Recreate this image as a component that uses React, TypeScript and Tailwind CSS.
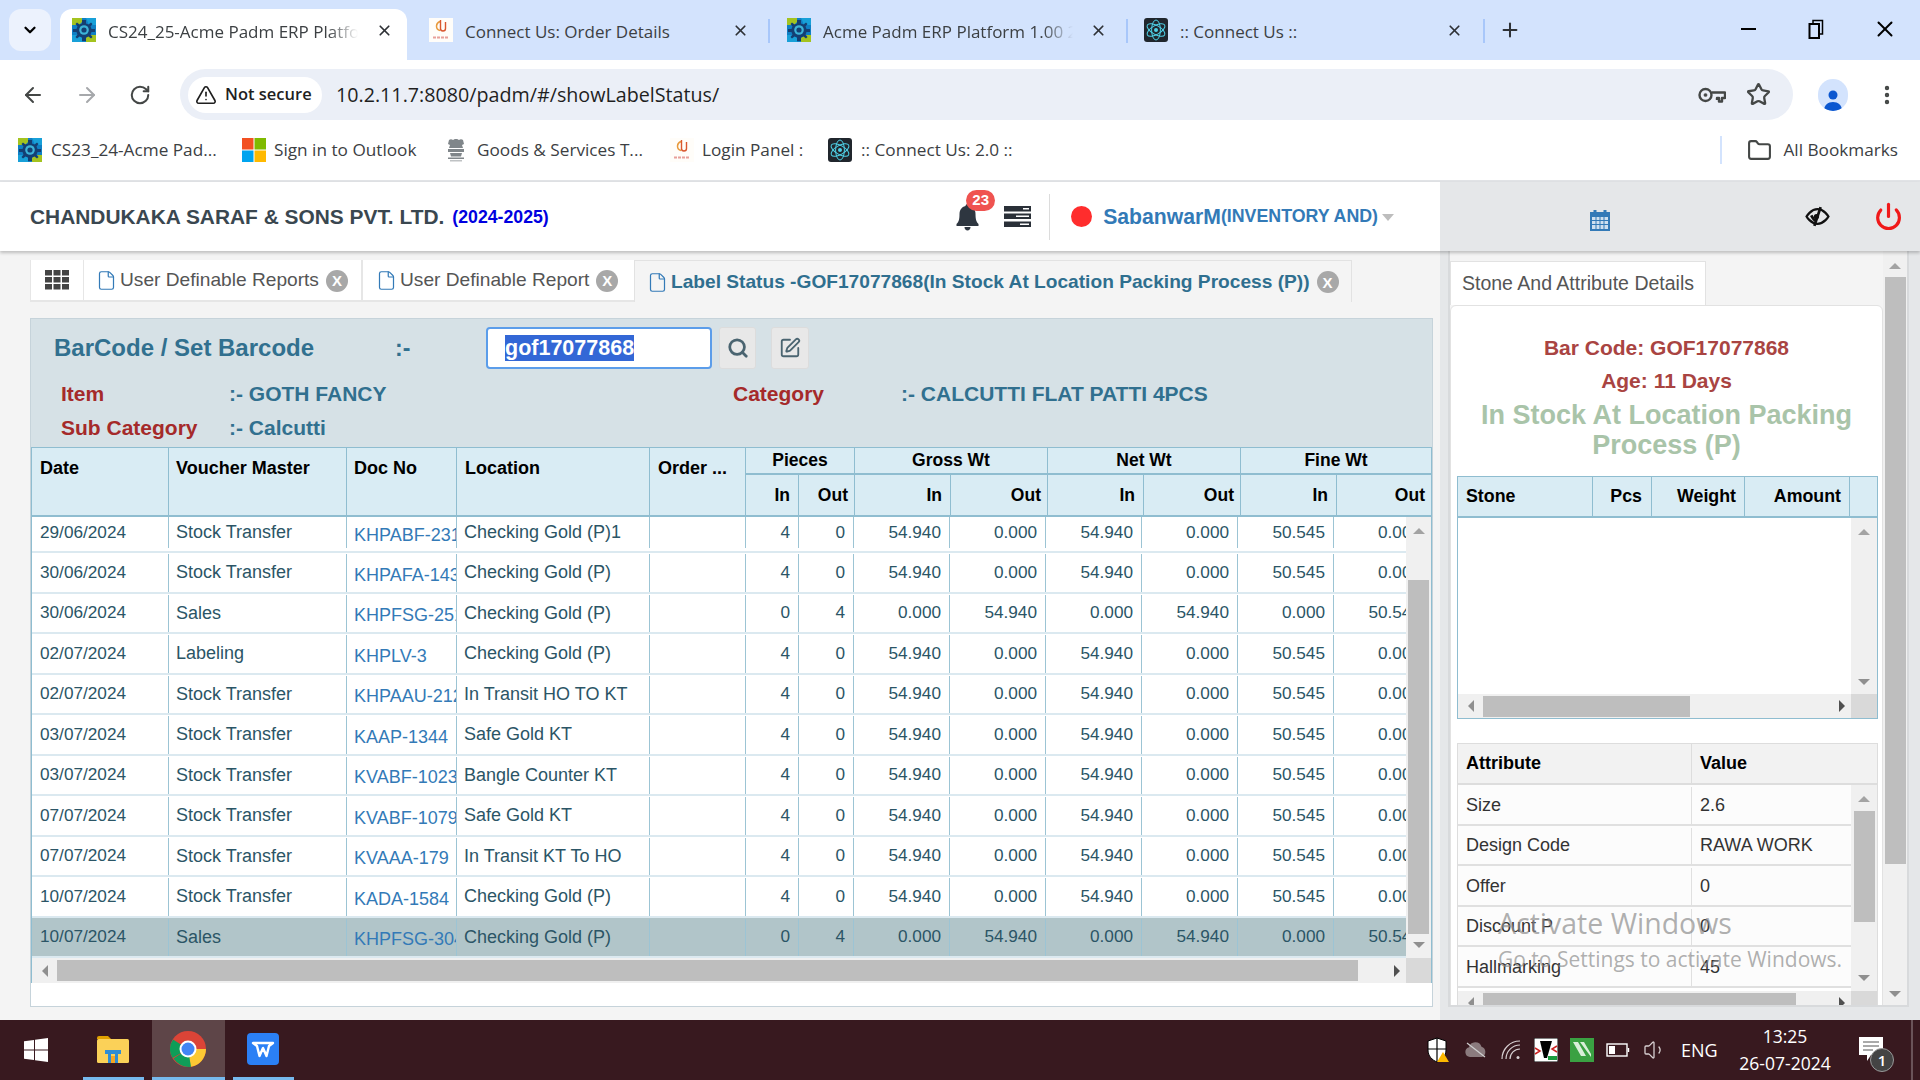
import {
  ArrowLeft,
  ArrowRight,
  ChevronDown,
  File,
  Folder,
  MoreVertical,
  Plus,
  Power,
  RotateCw,
  Search,
  SquarePen,
  Star,
  TriangleAlert,
  Volume1,
  X,
} from "lucide-react";

type Row = {
  date: string;
  voucher: string;
  doc: string;
  location: string;
  sold?: boolean;
  selected?: boolean;
  h?: string;
};

const ROWS: Row[] = [
  { date: "29/06/2024", voucher: "Stock Transfer", doc: "KHPABF-2314", location: "Checking Gold (P)1", h: "h-[36px] pb-[3px]" },
  { date: "30/06/2024", voucher: "Stock Transfer", doc: "KHPAFA-1432", location: "Checking Gold (P)" },
  { date: "30/06/2024", voucher: "Sales", doc: "KHPFSG-2512", location: "Checking Gold (P)", sold: true },
  { date: "02/07/2024", voucher: "Labeling", doc: "KHPLV-3", location: "Checking Gold (P)" },
  { date: "02/07/2024", voucher: "Stock Transfer", doc: "KHPAAU-2124", location: "In Transit HO TO KT" },
  { date: "03/07/2024", voucher: "Stock Transfer", doc: "KAAP-1344", location: "Safe Gold KT" },
  { date: "03/07/2024", voucher: "Stock Transfer", doc: "KVABF-1023", location: "Bangle Counter KT" },
  { date: "07/07/2024", voucher: "Stock Transfer", doc: "KVABF-1079", location: "Safe Gold KT" },
  { date: "07/07/2024", voucher: "Stock Transfer", doc: "KVAAA-179", location: "In Transit KT To HO" },
  { date: "10/07/2024", voucher: "Stock Transfer", doc: "KADA-1584", location: "Checking Gold (P)" },
  { date: "10/07/2024", voucher: "Sales", doc: "KHPFSG-3041", location: "Checking Gold (P)", sold: true, selected: true },
];

const ATTRS = [
  ["Size", "2.6"],
  ["Design Code", "RAWA WORK"],
  ["Offer", "0"],
  ["Discount P", "0"],
  ["Hallmarking", "45"],
];

function AcmeIcon() {
  return (
    <svg viewBox="0 0 24 24" className="h-[24px] w-[24px] shrink-0">
      <rect width="24" height="24" fill="#0f7fc4" />
      <path d="M0 0h10v4l-3 3H0zM24 24H14v-4l3-3h7z" fill="#a4c31f" />
      <path d="M14 0h10v7h-7zM0 17h7l3 3v4H0z" fill="#18a0d8" />
      <path d="M10 2h4v3.500l2.500 1 2.500-2 1.500 1.500-2 2.500 1 2.500H23v3h-3.500l-1 2.500 2 2.500-1.500 1.500-2.500-2-2.500 1V23h-4v-3.500l-2.500-1-2.500 2L3.500 19l2-2.500-1-2.500H1v-3h3.500l1-2.500-2-2.500L5 4.500l2.500 2 2.500-1z" fill="#143f73" />
      <circle cx="12" cy="12" r="4.800" fill="#3cb4d8" />
      <circle cx="12" cy="12" r="2.600" fill="#143f73" />
    </svg>
  );
}

function ReactIcon() {
  return (
    <svg viewBox="0 0 24 24" className="h-[24px] w-[24px] shrink-0">
      <rect width="24" height="24" rx="3" fill="#20262d" />
      <circle cx="12" cy="12" r="2" fill="#4fd0e6" />
      <g fill="none" stroke="#4fd0e6" strokeWidth="1">
        <ellipse cx="12" cy="12" rx="4.400" ry="10" />
        <ellipse cx="12" cy="12" rx="4.400" ry="10" transform="rotate(60 12 12)" />
        <ellipse cx="12" cy="12" rx="4.400" ry="10" transform="rotate(120 12 12)" />
      </g>
    </svg>
  );
}

function ConnectIcon() {
  return (
    <svg viewBox="0 0 24 24" className="h-[24px] w-[24px] shrink-0">
      <rect width="24" height="24" fill="#fffdf9" />
      <path d="M11 3.500a5 5 0 0 0-3.500 4.500c0 2.500 1.500 4 3.500 4.500" fill="none" stroke="#e89a3c" strokeWidth="1.500" />
      <path d="M11.500 2v8.500a2.500 2.500 0 0 0 5 0V4" fill="none" stroke="#d9572f" strokeWidth="1.400" />
      <path d="M4 19.500h16" stroke="#e8a09a" strokeWidth="2" strokeDasharray="3 1" />
    </svg>
  );
}

function MsIcon() {
  return (
    <svg viewBox="0 0 24 24" className="h-[24px] w-[24px] shrink-0">
      <rect width="11.500" height="11.500" fill="#f25022" />
      <rect x="12.500" width="11.500" height="11.500" fill="#7fba00" />
      <rect y="12.500" width="11.500" height="11.500" fill="#00a4ef" />
      <rect x="12.500" y="12.500" width="11.500" height="11.500" fill="#ffb900" />
    </svg>
  );
}

function EmblemIcon() {
  return (
    <svg viewBox="0 0 24 24" className="h-[24px] w-[24px] shrink-0" fill="#80868a">
      <path d="M5 2c1-1 3-1 4 0 1-1.500 5-1.500 6 0 1-1 3-1 4 0l1 4-2 1 1 3H5l1-3-2-1z" />
      <rect x="4" y="11" width="16" height="3" />
      <path d="M6 15h12l-1 3.500H7z" />
      <rect x="4" y="19.500" width="16" height="1.500" />
      <rect x="6" y="22" width="12" height="1.500" opacity="0.5" />
    </svg>
  );
}

function UpArrow() {
  return <div className="h-0 w-0 border-x-[6px] border-b-[6px] border-x-transparent border-b-[#a3a3a3]" />;
}

function DownArrow() {
  return <div className="h-0 w-0 border-x-[6px] border-t-[6px] border-x-transparent border-t-[#8f8f8f]" />;
}

function LeftArrow() {
  return <div className="h-0 w-0 border-y-[6px] border-r-[6px] border-y-transparent border-r-[#8f8f8f]" />;
}

function RightArrow() {
  return <div className="h-0 w-0 border-y-[6px] border-l-[6px] border-y-transparent border-l-[#505050]" />;
}

function TabClose() {
  return <X className="h-[17px] w-[17px] shrink-0 text-[#2e3136]" strokeWidth={2.4} />;
}

function TabSep() {
  return <div className="mt-[2px] h-[24px] w-[2px] self-center bg-[#a8c7fa]" />;
}

function BrowserChrome() {
  return (
    <div className="font-['Open_Sans',sans-serif] text-[#3c4043]">
      <div className="flex h-[60px] items-end bg-[#d3e3fd] pl-[9px]">
        <div className="mb-[9px] mr-[9px] flex h-[42px] w-[42px] items-center justify-center rounded-xl bg-[#ecf2fd]">
          <ChevronDown className="h-[18px] w-[18px] text-black" strokeWidth={3} />
        </div>
        <div className="flex h-[51px] w-[347px] items-center rounded-t-xl bg-white pb-[9px] pl-[12px] pr-[14px]">
          <AcmeIcon />
          <span className="ml-[12px] mt-[3px] w-[250px] overflow-hidden whitespace-nowrap text-[17px] [mask-image:linear-gradient(to_right,black_88%,transparent)]">
            CS24_25-Acme Padm ERP Platform 1.00
          </span>
          <span className="ml-auto"><TabClose /></span>
        </div>
        <div className="flex h-[51px] w-[361px] items-center pb-[9px] pl-[22px] pr-[19px]">
          <ConnectIcon />
          <span className="ml-[12px] mt-[3px] whitespace-nowrap text-[17px]">Connect Us: Order Details</span>
          <span className="ml-auto"><TabClose /></span>
        </div>
        <TabSep />
        <div className="flex h-[51px] w-[356px] items-center pb-[9px] pl-[17px] pr-[19px]">
          <AcmeIcon />
          <span className="ml-[12px] mt-[3px] w-[250px] overflow-hidden whitespace-nowrap text-[17px] [mask-image:linear-gradient(to_right,black_88%,transparent)]">
            Acme Padm ERP Platform 1.00 2
          </span>
          <span className="ml-auto"><TabClose /></span>
        </div>
        <TabSep />
        <div className="flex h-[51px] w-[355px] items-center pb-[9px] pl-[16px] pr-[20px]">
          <ReactIcon />
          <span className="ml-[12px] mt-[3px] whitespace-nowrap text-[17px]">:: Connect Us ::</span>
          <span className="ml-auto"><TabClose /></span>
        </div>
        <TabSep />
        <div className="flex h-[51px] w-[50px] items-center justify-center pb-[9px]">
          <Plus className="h-[22px] w-[22px] text-[#2e3136]" strokeWidth={2.2} />
        </div>
        <div className="ml-auto flex h-[60px] items-center pb-[2px] text-black">
          <div className="flex w-[68px] justify-center">
            <div className="h-[2px] w-[15px] bg-black" />
          </div>
          <div className="flex w-[68px] justify-center">
            <svg viewBox="0 0 16 20" className="h-[20px] w-[16px]" fill="none" stroke="black" strokeWidth="2">
              <rect x="1.500" y="5" width="9.500" height="14" />
              <path d="M5 4V1.500h9.500V15H12" strokeWidth="1.500" />
            </svg>
          </div>
          <div className="flex w-[70px] justify-center">
            <X className="h-[26px] w-[26px]" strokeWidth={1.8} />
          </div>
        </div>
      </div>

      <div className="flex h-[69px] items-center bg-white pl-[21px] pr-[15px]">
        <ArrowLeft className="h-[24px] w-[24px] text-[#444746]" strokeWidth={2} />
        <ArrowRight className="ml-[30px] h-[24px] w-[24px] text-[#a6a8ab]" strokeWidth={2} />
        <RotateCw className="ml-[30px] h-[22px] w-[22px] text-[#444746]" strokeWidth={2.2} />
        <div className="ml-[29px] flex h-[51px] w-[1613px] shrink-0 items-center rounded-full bg-[#ebeff7] pl-[8px] pr-[22px]">
          <div className="flex h-[36px] w-[134px] items-center rounded-full bg-white pl-[7px]">
            <TriangleAlert className="h-[22px] w-[22px] text-[#1f1f1f]" strokeWidth={1.8} />
            <span className="ml-[8px] text-[16.5px] font-semibold text-[#1f1f1f]">Not secure</span>
          </div>
          <span className="ml-[14px] text-[19.7px] text-[#1f1f1f]">10.2.11.7:8080/padm/#/showLabelStatus/</span>
          <svg viewBox="0 0 28 20" className="ml-auto h-[20px] w-[28px]" fill="none" stroke="#444746" strokeWidth="2.400">
            <circle cx="7.500" cy="10" r="6" />
            <circle cx="7.500" cy="10" r="1.600" fill="#444746" strokeWidth="0.500" />
            <path d="M13.500 7.500H27v5.500h-3v3.500h-3V13h-2v2" strokeLinejoin="round" />
          </svg>
          <Star className="ml-[20px] h-[25px] w-[25px] text-[#444746]" strokeWidth={2.2} />
        </div>
        <div className="ml-[25px] flex h-[32px] w-[30px] shrink-0 items-end justify-center overflow-hidden rounded-full bg-[#d3e3fd]">
          <svg viewBox="0 0 24 24" className="h-[24px] w-[24px]" fill="#0b57d0">
            <circle cx="12" cy="8" r="4.500" />
            <path d="M3 24c0-6 4-9 9-9s9 3 9 9z" />
          </svg>
        </div>
        <MoreVertical className="ml-[27px] h-[24px] w-[24px] shrink-0 text-[#444746]" strokeWidth={2.4} />
      </div>

      <div className="flex h-[53px] items-center border-b-[2px] border-[#e1e3e6] bg-white pb-[9px] pl-[18px] pr-[22px] text-[17.2px]">
        <AcmeIcon />
        <span className="ml-[9px] w-[166px] whitespace-nowrap">CS23_24-Acme Pad...</span>
        <span className="ml-[25px]"><MsIcon /></span>
        <span className="ml-[8px] w-[146px] whitespace-nowrap">Sign in to Outlook</span>
        <span className="ml-[24px]"><EmblemIcon /></span>
        <span className="ml-[9px] w-[167px] whitespace-nowrap">Goods & Services T...</span>
        <span className="ml-[26px]"><ConnectIcon /></span>
        <span className="ml-[8px] w-[101px] whitespace-nowrap">Login Panel :</span>
        <span className="ml-[25px]"><ReactIcon /></span>
        <span className="ml-[9px] whitespace-nowrap">:: Connect Us: 2.0 ::</span>
        <div className="ml-auto h-[28px] w-[2px] bg-[#d3e3fd]" />
        <Folder className="ml-[25px] h-[25px] w-[25px] text-[#444746]" strokeWidth={2} />
        <span className="ml-[11px] whitespace-nowrap">All Bookmarks</span>
      </div>
    </div>
  );
}

function AppHeader() {
  return (
    <div className="relative flex h-[69px] font-['Liberation_Sans',sans-serif] shadow-[0_2px_3px_rgba(0,0,0,0.22)]">
      <div className="flex w-[1440px] items-center bg-white pl-[30px]">
        <span className="text-[20.9px] font-bold text-[#3a4750]">CHANDUKAKA SARAF & SONS PVT. LTD.</span>
        <span className="ml-[8px] mt-[2px] text-[17.7px] font-bold text-[#0000e0]">(2024-2025)</span>
        <div className="relative ml-auto mr-[23px]">
          <svg viewBox="0 0 24 30" className="h-[30px] w-[27px]" fill="#2e3640">
            <path d="M12 2c1 0 2 .8 2 2 4 1 6 4 6 8 0 6 1 8 3 10v2H1v-2c2-2 3-4 3-10 0-4 2-7 6-8 0-1.200 1-2 2-2z" />
            <path d="M9 25h6c0 2-1.300 3.500-3 3.500S9 27 9 25z" />
          </svg>
          <div className="absolute left-[12px] top-[-12px] flex h-[21px] w-[29px] items-center justify-center rounded-full bg-[#ef5350] text-[15px] font-bold text-white">23</div>
        </div>
        <svg viewBox="0 0 27 21" className="mr-[18px] h-[21px] w-[27px]" fill="#2a3038">
          <rect width="27" height="5.500" />
          <rect y="7.500" width="27" height="5.500" />
          <rect y="15.500" width="27" height="5.500" />
          <rect x="19" y="2" width="6" height="1.500" fill="#fff" />
          <rect x="12" y="9.500" width="13" height="1.500" fill="#fff" />
          <rect x="16" y="17.500" width="9" height="1.500" fill="#fff" />
        </svg>
        <div className="h-[46px] w-[1px] bg-[#dcdcdc]" />
        <div className="ml-[21px] h-[21px] w-[21px] rounded-full bg-[#ff2d2d]" />
        <span className="ml-[11px] text-[21.2px] font-bold text-[#337ab7]">SabanwarM</span>
        <span className="text-[17.8px] font-bold text-[#337ab7]">(INVENTORY AND)</span>
        <div className="ml-[4px] mt-[2px] h-0 w-0 border-x-[6px] border-t-[7px] border-x-transparent border-t-[#bdbdbd]" />
        <div className="w-[46px]" />
      </div>
      <div className="flex flex-1 items-center bg-[#e5e7e9]">
        <svg viewBox="0 0 20 22" className="ml-[150px] mt-[7px] h-[22px] w-[20px]" fill="#337ab7">
          <path d="M0 3h3.500V1h3v2h7V1h3v2H20v19H0z" />
          <path d="M2 8h16v12H2z" fill="#cfe0ef" />
          <path d="M2 11.500h16M2 15.500h16M6 8v12M10 8v12M14 8v12" stroke="#337ab7" strokeWidth="1" />
        </svg>
        <svg viewBox="0 0 24 24" className="ml-[195px] h-[25px] w-[25px]" fill="none" stroke="#111" strokeWidth="2.200">
          <path d="M1.500 12S5.500 5 12 5s10.500 7 10.500 7-4 7-10.500 7S1.500 12 1.500 12z" />
          <path d="M6 11c1.500 3 3 5 5 6M15 3 9 21" strokeWidth="2.600" />
          <circle cx="11" cy="12" r="2.500" fill="#111" stroke="none" />
        </svg>
        <Power className="ml-[44px] h-[29px] w-[29px] text-[#f01919]" strokeWidth={2.6} />
      </div>
    </div>
  );
}

function XBadge() {
  return (
    <span className="ml-[7px] flex h-[22px] w-[22px] shrink-0 items-center justify-center rounded-full bg-[#a8a8a8] text-[15px] font-bold leading-none text-white">
      X
    </span>
  );
}

function NavTabs() {
  return (
    <div className="flex h-[42px] text-[19.15px] text-[#555]">
      <div className="flex h-[42px] w-[54px] items-center justify-center border-x border-b-2 border-[#e6e6e6] bg-white">
        <svg viewBox="0 0 24 20" className="h-[20px] w-[24px]" fill="#444">
          <path d="M0 0h7v5.500H0zM8.500 0h7v5.500h-7zM17 0h7v5.500h-7zM0 7h7v5.500H0zM8.500 7h7v5.500h-7zM17 7h7v5.500h-7zM0 14h7v5.500H0zM8.500 14h7v5.500h-7zM17 14h7v5.500h-7z" />
        </svg>
      </div>
      <div className="flex w-[279px] items-center border-b-2 border-r-2 border-[#e6e6e6] bg-white pl-[12px] pt-[1px]">
        <File className="h-[21px] w-[21px] text-[#337ab7]" strokeWidth={1.4} />
        <span className="ml-[3px] whitespace-nowrap">User Definable Reports</span>
        <XBadge />
      </div>
      <div className="flex w-[271px] items-center border-b-2 border-[#e6e6e6] bg-white pl-[13px] pt-[1px]">
        <File className="h-[21px] w-[21px] text-[#337ab7]" strokeWidth={1.4} />
        <span className="ml-[3px] whitespace-nowrap">User Definable Report</span>
        <XBadge />
      </div>
      <div className="flex w-[718px] items-center border border-b-0 border-[#e2e2e2] bg-[#f4f4f4] pl-[12px] pt-[1px]">
        <File className="h-[21px] w-[21px] text-[#337ab7]" strokeWidth={1.4} />
        <span className="ml-[3px] whitespace-nowrap font-bold text-[#2f6f8f]">
          Label Status -GOF17077868(In Stock At Location Packing Process (P))
        </span>
        <XBadge />
      </div>
    </div>
  );
}

function InfoPanel() {
  return (
    <div className="h-[128px]">
      <div className="flex items-center pt-[8px]">
        <span className="ml-[23px] w-[341px] whitespace-nowrap text-[24px] font-bold text-[#31708f]">BarCode / Set Barcode</span>
        <span className="w-[91px] text-[23px] font-bold text-[#31708f]">:-</span>
        <div className="flex h-[42px] w-[226px] items-center rounded-[4px] border-2 border-[#5b9dea] bg-white pl-[17px]">
          <span className="bg-[#3367d6] text-[21.5px] font-bold leading-[26px] text-white">gof17077868</span>
        </div>
        <div className="ml-[7px] flex h-[42px] w-[37px] items-center justify-center rounded-[3px] border border-[#dcdcdc] bg-[#e8e8e8]">
          <Search className="h-[22px] w-[22px] text-[#4a6470]" strokeWidth={3} />
        </div>
        <div className="ml-[15px] flex h-[42px] w-[38px] items-center justify-center rounded-[3px] border border-[#dcdcdc] bg-[#e8e8e8]">
          <SquarePen className="h-[22px] w-[22px] text-[#4a6470]" strokeWidth={2} />
        </div>
      </div>
      <div className="mt-[8px] flex h-[34px] items-center text-[21px] font-bold">
        <span className="ml-[30px] w-[168px] text-[#a52a2a]">Item</span>
        <span className="w-[504px] text-[#31708f]">:- GOTH FANCY</span>
        <span className="w-[168px] text-[#a52a2a]">Category</span>
        <span className="text-[#31708f]">:- CALCUTTI FLAT PATTI 4PCS</span>
      </div>
      <div className="flex h-[34px] items-center text-[21px] font-bold">
        <span className="ml-[30px] w-[168px] text-[#a52a2a]">Sub Category</span>
        <span className="text-[#31708f]">:- Calcutti</span>
      </div>
    </div>
  );
}

function HeadGroup({ title, a, last }: { title: string; a: string; last?: boolean }) {
  return (
    <div className={`flex flex-col text-[17.5px] ${last ? "" : "border-r border-[#8fbdd0]"}`}>
      <div className="flex h-[27px] items-center justify-center border-b-2 border-[#8fbdd0]">{title}</div>
      <div className="flex flex-1">
        <div className={`flex ${a} shrink-0 items-center justify-end border-r border-[#8fbdd0] pr-[8px]`}>In</div>
        <div className="flex flex-1 items-center justify-end pr-[6px]">Out</div>
      </div>
    </div>
  );
}

function LabelTable() {
  const headCell = "border-r border-[#8fbdd0] pt-[7px] text-[18px]";
  const textCell = "flex items-center border-r border-[#9cc4d4] text-[18px]";
  const bodyCell = "flex items-center justify-end border-r border-[#9cc4d4] pr-[8px]";
  return (
    <div className="border-x border-t border-[#8fbdd0] text-[17.2px]">
      <div className="grid h-[69px] grid-cols-[137px_178px_110px_193px_96px_109px_193px_193px_190px] border-b-2 border-[#8fbdd0] bg-[#d9ecf4] font-bold text-black">
        <div className={`${headCell} pl-[8px]`}>Date</div>
        <div className={`${headCell} pl-[7px]`}>Voucher Master</div>
        <div className={`${headCell} pl-[7px]`}>Doc No</div>
        <div className={`${headCell} pl-[8px]`}>Location</div>
        <div className={`${headCell} pl-[8px]`}>Order ...</div>
        <HeadGroup title="Pieces" a="w-[53px]" />
        <HeadGroup title="Gross Wt" a="w-[96px]" />
        <HeadGroup title="Net Wt" a="w-[96px]" />
        <HeadGroup title="Fine Wt" a="w-[96px]" last />
      </div>
      <div className="flex">
        <div className="h-[441px] w-[1374px] overflow-hidden">
          {ROWS.map((r, i) => (
            <div
              key={i}
              className={`grid w-[1399px] grid-cols-[137px_178px_110px_193px_96px_53px_55px_96px_96px_96px_96px_96px_96px] border-b-2 border-[#dbe9f0] text-[#2b5566] ${r.h ?? "h-[40.5px] pt-[1px]"} ${r.selected ? "bg-[#b1c5c9]" : "bg-white"}`}
            >
              <div className="flex items-center border-r border-[#9cc4d4] pl-[8px]">{r.date}</div>
              <div className={`${textCell} pl-[7px]`}>{r.voucher}</div>
              <div className={`${textCell} overflow-hidden whitespace-nowrap pl-[7px] pt-[5px] text-[#337ab7]`}>{r.doc}</div>
              <div className={`${textCell} pl-[7px]`}>{r.location}</div>
              <div className="border-r border-[#9cc4d4]" />
              <div className={bodyCell}>{r.sold ? "0" : "4"}</div>
              <div className={bodyCell}>{r.sold ? "4" : "0"}</div>
              <div className={bodyCell}>{r.sold ? "0.000" : "54.940"}</div>
              <div className={bodyCell}>{r.sold ? "54.940" : "0.000"}</div>
              <div className={bodyCell}>{r.sold ? "0.000" : "54.940"}</div>
              <div className={bodyCell}>{r.sold ? "54.940" : "0.000"}</div>
              <div className={bodyCell}>{r.sold ? "0.000" : "50.545"}</div>
              <div className={bodyCell}>{r.sold ? "50.545" : "0.000"}</div>
            </div>
          ))}
        </div>
        <div className="flex h-[441px] w-[25px] flex-col items-center bg-[#f0f0f0]">
          <div className="flex h-[63px] w-full shrink-0 items-start justify-center pt-[11px]"><UpArrow /></div>
          <div className="h-[354px] w-[21px] shrink-0 bg-[#bebebe]" />
          <div className="mt-[8px]"><DownArrow /></div>
        </div>
      </div>
      <div className="flex h-[25px] w-full">
        <div className="flex w-[1374px] items-center bg-[#f0f0f0]">
          <div className="flex w-[25px] justify-center"><LeftArrow /></div>
          <div className="h-[21px] w-[1301px] bg-[#bebebe]" />
          <div className="ml-auto flex w-[25px] justify-center pl-[6px]"><RightArrow /></div>
        </div>
        <div className="w-[25px] bg-[#d9d9d9]" />
      </div>
    </div>
  );
}

function SidePanel() {
  return (
    <div className="flex w-[480px] bg-[#e5e7e9] pb-[13px] pl-[8px] pr-[11px] font-['Liberation_Sans',sans-serif]">
      <div className="flex flex-1 overflow-hidden border-x-2 border-b-2 border-[#d8dadc] bg-[#f4f4f4]">
        <div className="w-[433px] shrink-0 pt-[10px]">
          <div className="flex h-[44px] w-[256px] items-center border-x border-t border-[#e2e2e2] bg-white pl-[11px] text-[19.5px] text-[#555]">
            Stone And Attribute Details
          </div>
          <div className="h-[1000px] rounded-t-[6px] border border-[#e2e2e2] bg-white px-[6px]">
            <div className="pt-[30px] text-center font-bold">
              <div className="text-[21px] leading-[24px] text-[#a94442]">Bar Code: GOF17077868</div>
              <div className="mt-[9px] text-[21px] leading-[24px] text-[#a94442]">Age: 11 Days</div>
              <div className="mt-[8px] text-[27px] leading-[29.5px] text-[#a9c4a9]">
                In Stock At Location Packing
                <br />
                Process (P)
              </div>
            </div>
            <div className="mt-[16px] w-[421px] border border-[#8fbdd0] text-[17.8px]">
              <div className="grid h-[41px] grid-cols-[135px_59px_93px_105px_27px] border-b-2 border-[#8fbdd0] bg-[#d9ecf4] font-bold text-black">
                <div className="flex items-center border-r border-[#8fbdd0] pl-[8px]">Stone</div>
                <div className="flex items-center justify-end border-r border-[#8fbdd0] pr-[9px]">Pcs</div>
                <div className="flex items-center justify-end border-r border-[#8fbdd0] pr-[8px]">Weight</div>
                <div className="flex items-center justify-end border-r border-[#8fbdd0] pr-[8px]">Amount</div>
                <div />
              </div>
              <div className="flex h-[176px]">
                <div className="w-[393px] bg-white" />
                <div className="flex flex-1 flex-col items-center justify-between bg-[#f0f0f0] pb-[9px] pt-[11px]">
                  <UpArrow />
                  <DownArrow />
                </div>
              </div>
              <div className="flex h-[24px] items-center">
                <div className="flex h-full w-[393px] items-center bg-[#f0f0f0]">
                  <div className="flex w-[25px] justify-center"><LeftArrow /></div>
                  <div className="h-[21px] w-[207px] bg-[#bebebe]" />
                  <div className="ml-auto flex w-[25px] justify-center pl-[6px]"><RightArrow /></div>
                </div>
                <div className="h-full flex-1 bg-[#d9d9d9]" />
              </div>
            </div>
            <div className="mt-[24px] w-[421px] border border-[#dddddd] text-[18px] text-[#333]">
              <div className="grid h-[41px] grid-cols-[234px_1fr] border-b-2 border-[#dddddd] bg-[#f2f2f2] font-bold text-black">
                <div className="flex items-center border-r border-[#dddddd] pl-[8px]">Attribute</div>
                <div className="flex items-center pl-[8px]">Value</div>
              </div>
              <div className="flex h-[206px]">
                <div className="w-[393px]">
                  {ATTRS.map(([k, v]) => (
                    <div key={k} className="grid h-[40.5px] grid-cols-[234px_1fr] border-b-2 border-[#e0e0e0] bg-[#fcfcfc] pt-[2px]">
                      <div className="flex items-center border-r border-[#e0e0e0] pl-[8px]">{k}</div>
                      <div className="flex items-center pl-[8px]">{v}</div>
                    </div>
                  ))}
                </div>
                <div className="flex flex-1 flex-col items-center bg-[#f0f0f0] pt-[11px]">
                  <UpArrow />
                  <div className="mt-[9px] h-[111px] w-[21px] bg-[#bebebe]" />
                  <div className="mt-[53px]"><DownArrow /></div>
                </div>
              </div>
              <div className="flex h-[24px] items-start">
                <div className="flex h-full w-[393px] items-start bg-[#f0f0f0] pt-[2px]">
                  <div className="flex w-[25px] justify-center pt-[4px]"><LeftArrow /></div>
                  <div className="h-[21px] w-[313px] bg-[#bebebe]" />
                  <div className="ml-auto flex w-[25px] justify-center pl-[6px] pt-[4px]"><RightArrow /></div>
                </div>
                <div className="h-full flex-1 bg-[#d9d9d9]" />
              </div>
            </div>
          </div>
        </div>
        <div className="flex flex-1 flex-col items-center bg-[#f0f0f0]">
          <div className="flex h-[26px] items-center pt-[3px]"><UpArrow /></div>
          <div className="h-[587px] w-[21px] shrink-0 bg-[#bebebe]" />
          <div className="mt-auto pb-[8px]"><DownArrow /></div>
        </div>
      </div>
    </div>
  );
}

function WinLogo() {
  return (
    <svg viewBox="0 0 24 24" className="h-[24px] w-[24px]" fill="#fff">
      <path d="M0 3.300 10 2v9.500H0zM11 1.800 24 0v11.500H11zM0 12.500h10V22L0 20.700zM11 12.500h13V24l-13-1.800z" />
    </svg>
  );
}

function Taskbar() {
  return (
    <div className="relative flex h-[60px] items-stretch bg-[#38191f] pl-[83px] font-['Open_Sans',sans-serif] text-white">
      <div className="absolute left-[24px] top-[18px]"><WinLogo /></div>
      <div className="flex w-[61px] items-center justify-center border-b-[3px] border-[#76b9ed]">
        <svg viewBox="0 0 32 28" className="-ml-[2px] h-[28px] w-[32px]">
          <path d="M0 3a2 2 0 0 1 2-2h9l3 3H0z" fill="#e0a100" />
          <rect y="4" width="32" height="24" rx="1.500" fill="#fbd158" />
          <path d="M8 15h16v4H8z" fill="#2f8dd4" />
          <path d="M11 19h3v9h-3zM18 19h3v9h-3z" fill="#2f8dd4" />
          <rect x="14" y="21" width="4" height="7" fill="#f6a623" />
        </svg>
      </div>
      <div className="ml-[8px] flex w-[73px] items-center justify-center border-b-[3px] border-[#76b9ed] bg-[#5e4548]">
        <svg viewBox="0 0 36 36" className="-ml-[2px] h-[36px] w-[36px]">
          <circle cx="18" cy="18" r="18" fill="#db4437" />
          <path d="M18 18 2.400 27A18 18 0 0 1 3 8.500z" fill="#0f9d58" />
          <path d="M18 18h18a18 18 0 0 1-15 17.800L10 27z" fill="#fcc934" />
          <path d="M3.500 27.500 18 18l3 17.800a18 18 0 0 1-17.500-8.300z" fill="#0f9d58" />
          <circle cx="18" cy="18" r="8.500" fill="#fff" />
          <circle cx="18" cy="18" r="6.500" fill="#4285f4" />
        </svg>
      </div>
      <div className="ml-[8px] flex w-[61px] items-center justify-center border-b-[3px] border-[#76b9ed]">
        <svg viewBox="0 0 32 32" className="-ml-[2px] h-[32px] w-[32px]">
          <rect width="32" height="32" rx="4" fill="#2b80f5" />
          <path d="M6 10h20l-4 3-2.500 10L16 15l-3.500 8L10 13z" fill="none" stroke="#fff" strokeWidth="2.400" strokeLinejoin="round" />
        </svg>
      </div>
      <div className="ml-auto flex items-center pr-[7px] text-[19px]">
        <svg viewBox="0 0 24 26" className="h-[26px] w-[24px]">
          <path d="M11 1 2 4v9c0 6 4 10 9 12 5-2 9-6 9-12V4z" fill="#fff" stroke="#000" />
          <path d="M11 1v24M2 12h18" stroke="#000" strokeWidth="1.200" />
          <path d="M17 15l6 10H11z" fill="#fdb900" />
        </svg>
        <svg viewBox="0 0 24 16" className="ml-[14px] h-[16px] w-[24px]">
          <path d="M6 15a5 5 0 0 1-1-9.800 6.500 6.500 0 0 1 12.500-.5A5.500 5.500 0 0 1 18 15z" fill="#8b7b7e" />
          <path d="M3 1l18 14" stroke="#d0d0d0" strokeWidth="1.200" />
        </svg>
        <svg viewBox="0 0 20 20" className="ml-[13px] h-[20px] w-[20px]" fill="none" stroke="#d8d0d2" strokeWidth="1.200">
          <path d="M1 19A18 18 0 0 1 19 1" />
          <path d="M5 19A14 14 0 0 1 19 5" />
          <path d="M9 19A10 10 0 0 1 19 9" />
          <circle cx="17" cy="17.500" r="1.500" fill="#d8d0d2" stroke="none" />
        </svg>
        <svg viewBox="0 0 24 24" className="ml-[13px] h-[24px] w-[24px]">
          <rect width="24" height="24" fill="#fff" stroke="#000" />
          <path d="M6 3h12l-5 17h-3z" fill="#000" />
          <path d="M1 10l5 3-5 3M23 8l-5 3 5 3" fill="none" stroke="#c22" strokeWidth="1.500" />
          <rect x="14" y="18" width="9" height="4" fill="#1a9c3e" />
        </svg>
        <svg viewBox="0 0 24 24" className="ml-[12px] h-[24px] w-[24px]">
          <rect width="24" height="24" fill="#3aa142" />
          <path d="M3 4h5l8 14h-5zM10 4h4l7 12v3z" fill="#d9efd9" />
        </svg>
        <svg viewBox="0 0 24 14" className="ml-[12px] h-[14px] w-[24px]" fill="none" stroke="#fff" strokeWidth="1.400">
          <rect x="1" y="1" width="20" height="12" />
          <rect x="3" y="3" width="6" height="8" fill="#fff" stroke="none" />
          <path d="M22.500 5v4" />
        </svg>
        <Volume1 className="ml-[13px] h-[24px] w-[24px] text-[#d8d0d2]" strokeWidth={1.3} />
        <span className="ml-[14px] w-[36px] text-[18px]">ENG</span>
        <div className="ml-[20px] flex w-[96px] flex-col items-center text-[17.5px] leading-[27px]">
          <span>13:25</span>
          <span className="whitespace-nowrap">26-07-2024</span>
        </div>
        <div className="relative ml-[26px] h-[26px] w-[24px]">
          <svg viewBox="0 0 24 26" className="h-[26px] w-[24px]" fill="#fff">
            <path d="M0 0h24v18H12l-4 6v-6H0z" />
            <path d="M4 5h16M4 9h16M4 13h10" stroke="#555" strokeWidth="1" />
          </svg>
          <div className="absolute left-[11px] top-[11px] flex h-[24px] w-[24px] items-center justify-center rounded-full border border-[#999] bg-[#444] text-[15px] font-semibold">1</div>
        </div>
        <div className="ml-[28px] h-full w-[2px] bg-[#6a5358]" />
      </div>
    </div>
  );
}

export default function App() {
  return (
    <div className="relative h-[1080px] w-[1920px] overflow-hidden bg-[#f4f4f4]">
      <BrowserChrome />
      <AppHeader />
      <div className="flex h-[769px]">
        <div className="w-[1440px] pl-[30px] pt-[9px] font-['Liberation_Sans',sans-serif]">
          <NavTabs />
          <div className="mt-[16px] h-[689px] w-[1403px] border border-[#c6d3da] bg-white">
            <div className="bg-[#d6e1e6]">
              <InfoPanel />
            </div>
            <LabelTable />
          </div>
        </div>
        <SidePanel />
      </div>
      <Taskbar />
      <div className="pointer-events-none absolute left-[1498px] top-[900px] font-['Open_Sans',sans-serif] text-[#8c8c8c]/70">
        <div className="text-[28.5px] leading-[46px]">Activate Windows</div>
        <div className="text-[21px] leading-[26px]">Go to Settings to activate Windows.</div>
      </div>
    </div>
  );
}
